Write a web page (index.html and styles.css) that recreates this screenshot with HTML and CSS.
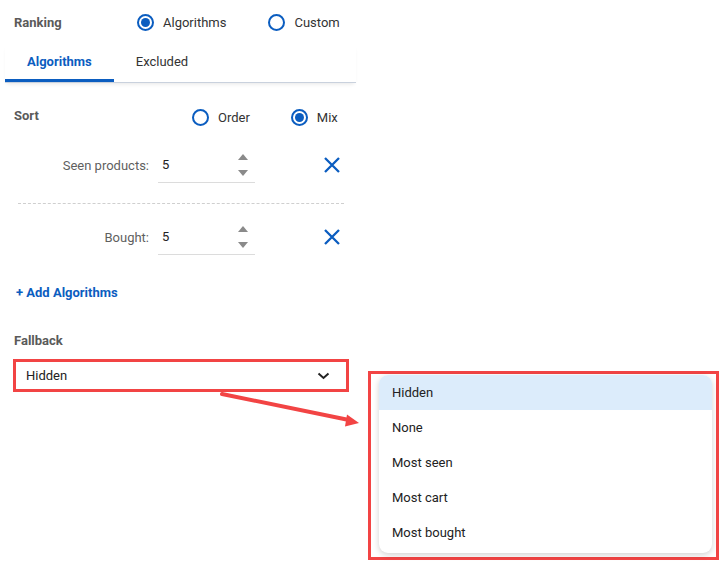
FILE: index.html
```html
<!DOCTYPE html>
<html>
<head>
<meta charset="utf-8">
<link rel="stylesheet" href="styles.css">
</head>
<body>
<div class="panel">
  <div class="row ranking">
    <span class="hdr">Ranking</span>
    <div class="radios">
      <label class="radio"><span class="dot checked"></span>Algorithms</label>
      <label class="radio"><span class="dot"></span>Custom</label>
    </div>
  </div>
  <div class="tabs">
    <div class="tab active">Algorithms</div>
    <div class="tab">Excluded</div>
  </div>
  <div class="row sort">
    <span class="hdr">Sort</span>
    <div class="radios sort-radios">
      <label class="radio"><span class="dot"></span>Order</label>
      <label class="radio"><span class="dot checked"></span>Mix</label>
    </div>
  </div>
  <div class="alg first">
    <span class="alg-label">Seen products:</span>
    <div class="num">
      <span class="val">5</span>
      <span class="spin"><i class="up"></i><i class="down"></i></span>
    </div>
    <svg class="del" width="16" height="16" viewBox="0 0 16 16"><path d="M1 1L15 15M15 1L1 15" stroke="#0b5dc0" stroke-width="2.3" fill="none"/></svg>
  </div>
  <div class="divider"></div>
  <div class="alg second">
    <span class="alg-label">Bought:</span>
    <div class="num">
      <span class="val">5</span>
      <span class="spin"><i class="up"></i><i class="down"></i></span>
    </div>
    <svg class="del" width="16" height="16" viewBox="0 0 16 16"><path d="M1 1L15 15M15 1L1 15" stroke="#0b5dc0" stroke-width="2.3" fill="none"/></svg>
  </div>
  <div class="add">+ Add Algorithms</div>
  <div class="hdr fallback">Fallback</div>
  <div class="select">
    <span>Hidden</span>
    <svg width="13" height="8" viewBox="0 0 13 8"><path d="M1.5 1.5L6.5 6L11.5 1.5" stroke="#222" stroke-width="2" fill="none"/></svg>
  </div>
</div>

<svg class="arrow" width="719" height="561" viewBox="0 0 719 561">
  <line x1="222" y1="394" x2="349" y2="420" stroke="#f24444" stroke-width="4" stroke-linecap="round"/>
  <polygon points="359,423 347,414.5 345,426.5" fill="#f24444"/>
</svg>

<div class="menu-frame">
  <ul class="menu">
    <li class="sel">Hidden</li>
    <li>None</li>
    <li>Most seen</li>
    <li>Most cart</li>
    <li>Most bought</li>
  </ul>
</div>
</body>
</html>
```
FILE: styles.css
```css
* { box-sizing: border-box; }
html, body { margin: 0; padding: 0; background: #fff; }
body {
  font-family: Roboto, "Liberation Sans", sans-serif;
  font-size: 13px;
  color: #333;
  width: 719px;
  height: 561px;
  overflow: hidden;
  position: relative;
}
.panel { width: 356px; }
.row { display: flex; align-items: center; height: 44px; }
.hdr { font-weight: 700; color: #5a5a5a; padding-left: 14px; }
.ranking .hdr { width: 137px; }
.radios { display: flex; align-items: center; gap: 42px; }
.radio { display: flex; align-items: center; color: #333; }
.dot {
  width: 17px; height: 17px; border-radius: 50%;
  border: 2px solid #0b5dc0; margin-right: 9px;
  display: flex; align-items: center; justify-content: center;
}
.dot.checked::after {
  content: ""; width: 9px; height: 9px; border-radius: 50%; background: #0b5dc0;
}
.tabs {
  display: flex; margin-left: 5px; width: 351px;
  border-bottom: 1px solid #c9d1dd;
  box-shadow: 0 3px 4px -2px rgba(0,0,0,0.10);
}
.tab { height: 38px; line-height: 35px; padding: 0 22px; color: #333; }
.tab.active { color: #0b5dc0; font-weight: 700; border-bottom: 3px solid #0b5dc0; }
.sort { height: 34px; margin-top: 16px; }
.sort .hdr { width: 192px; position: relative; top: -1px; }
.sort-radios { gap: 41px; position: relative; top: 1px; }
.alg { display: flex; align-items: center; height: 36px; }
.alg.first { margin-top: 14px; }
.alg.second { margin-top: 15px; }
.alg-label { width: 149px; text-align: right; color: #5f5f5f; margin-right: 9px; }
.num {
  width: 97px; height: 36px; border-bottom: 1px solid #dcdcdc;
  display: flex; align-items: center; padding: 0 7px 0 4px;
}
.val { flex: 1; color: #222; }
.spin { display: flex; flex-direction: column; align-items: center; gap: 10px; }
.spin i { display: block; width: 0; height: 0; border-left: 5px solid transparent; border-right: 5px solid transparent; }
.spin .up { border-bottom: 6px solid #8a8a8a; }
.spin .down { border-top: 6px solid #8a8a8a; }
.del { margin-left: 69px; }
.divider { margin: 20px 12px 0 18px; border-top: 1px dashed #cfcfcf; }
.add { margin-top: 28px; padding-left: 16px; line-height: 20px; font-weight: 700; color: #0b5dc0; }
.fallback { margin-top: 28px; line-height: 20px; }
.select {
  margin: 8px 0 0 13px; width: 336px; height: 33px;
  border: 3px solid #f24444;
  display: flex; align-items: center; justify-content: space-between;
  padding: 0 16px 0 10px; color: #222;
}
.arrow { position: absolute; left: 0; top: 0; pointer-events: none; }
.menu-frame {
  position: absolute; left: 368px; top: 371px; width: 351px; height: 189px;
  border: 3px solid #f24444; background: #fff;
  padding: 1px 4px 4px 8px;
}
.menu {
  list-style: none; margin: 0; padding: 0;
  height: 178px; border-radius: 9px; background: #fff;
  box-shadow: 0 2px 6px rgba(0,0,0,0.18);
  overflow: hidden;
}
.menu li { height: 35px; line-height: 35px; padding-left: 13px; color: #222; }
.menu li.sel { background: #dcecfb; }
```
